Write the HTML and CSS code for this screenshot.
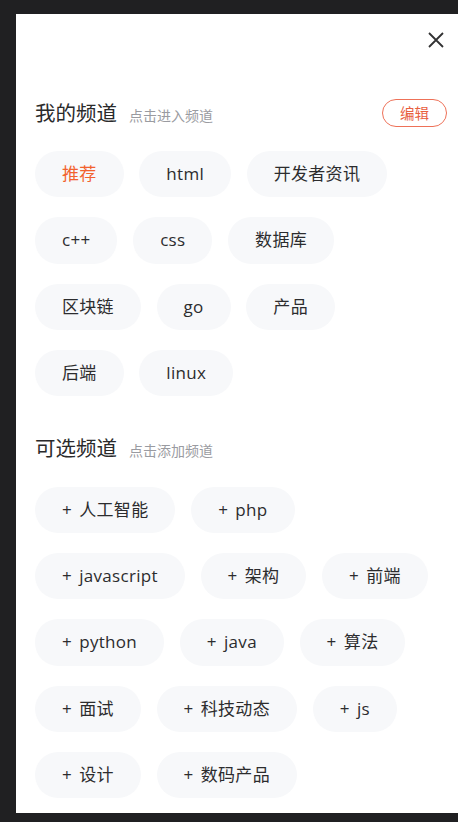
FILE: index.html
```html
<!DOCTYPE html>
<html lang="zh-CN">
<head>
<meta charset="utf-8">
<title>频道管理</title>
<link rel="stylesheet" href="styles.css">
</head>
<body>
<div class="panel">
  <div class="close-row">
    <svg class="close" width="16" height="16" viewBox="0 0 16 16"><path d="M1 1L15 15M15 1L1 15" stroke="#323233" stroke-width="1.8" fill="none"/></svg>
  </div>
  <section class="section">
    <div class="head">
      <div class="titles"><span class="title">我的频道</span><span class="hint">点击进入频道</span></div>
      <button class="edit">编辑</button>
    </div>
    <div class="chips">
      <span class="chip active">推荐</span>
      <span class="chip">html</span>
      <span class="chip">开发者资讯</span>
      <span class="chip">c++</span>
      <span class="chip">css</span>
      <span class="chip">数据库</span>
      <span class="chip">区块链</span>
      <span class="chip">go</span>
      <span class="chip">产品</span>
      <span class="chip">后端</span>
      <span class="chip">linux</span>
    </div>
  </section>
  <section class="section second">
    <div class="head">
      <div class="titles"><span class="title">可选频道</span><span class="hint">点击添加频道</span></div>
    </div>
    <div class="chips">
      <span class="chip">+ 人工智能</span>
      <span class="chip">+ php</span>
      <span class="chip">+ javascript</span>
      <span class="chip">+ 架构</span>
      <span class="chip">+ 前端</span>
      <span class="chip">+ python</span>
      <span class="chip">+ java</span>
      <span class="chip">+ 算法</span>
      <span class="chip">+ 面试</span>
      <span class="chip">+ 科技动态</span>
      <span class="chip">+ js</span>
      <span class="chip">+ 设计</span>
      <span class="chip">+ 数码产品</span>
    </div>
  </section>
</div>
</body>
</html>
```
FILE: styles.css
```css
html, body {
  margin: 0;
  padding: 0;
  background: #202022;
  height: 100%;
  overflow: hidden;
}
body {
  font-family: "Open Sans", "Noto Sans CJK SC", sans-serif;
  color: #323233;
}
.panel {
  margin: 14px 0 0 16px;
  height: 799px;
  background: #fff;
  padding: 18px 11px 0 19px;
  box-sizing: border-box;
}
.close-row {
  display: flex;
  justify-content: flex-end;
  padding-right: 3px;
  height: 16px;
}
.close { display: block; }
.section { margin-top: 51px; }
.section.second { margin-top: 38.5px; }
.head {
  display: flex;
  align-items: center;
  justify-content: space-between;
  height: 28px;
}
.titles {
  display: flex;
  align-items: baseline;
  margin-top: -3px;
}
.title {
  font-size: 20.5px;
  color: #2a2a2b;
}
.hint {
  font-size: 14px;
  color: #9a9ba1;
  margin-left: 12px;
}
.edit {
  width: 65px;
  height: 28px;
  border: 1px solid #ee7158;
  border-radius: 14px;
  background: #fff;
  color: #e8603f;
  font-family: "Noto Sans CJK SC", sans-serif;
  font-size: 14.5px;
  padding: 0;
  line-height: 26px;
}
.chips {
  margin: 24px 9px 0 0;
  display: flex;
  flex-wrap: wrap;
  column-gap: 15.7px;
  row-gap: 19.9px;
}
.chip {
  height: 46.4px;
  line-height: 46.4px;
  padding: 0 27px;
  border-radius: 23.2px;
  background: #f7f8fa;
  font-size: 17px;
  color: #2c2c2e;
  letter-spacing: 0.3px;
  word-spacing: 2.5px;
  white-space: nowrap;
}
.chip.active { color: #f2622e; }
```
